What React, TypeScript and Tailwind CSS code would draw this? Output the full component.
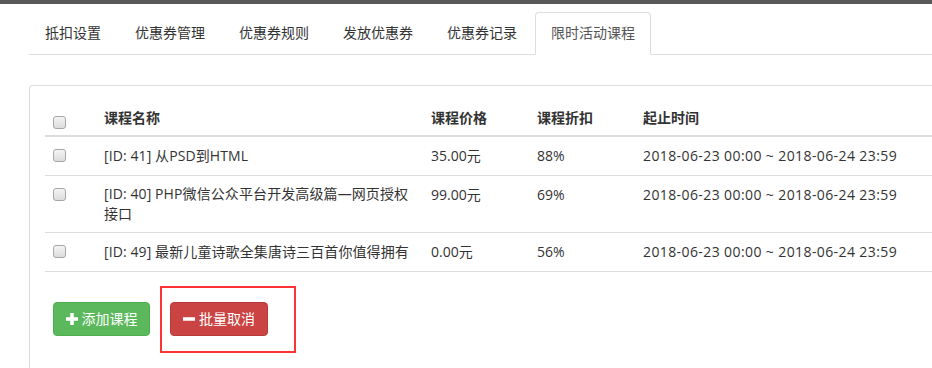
import React from "react";

const font = { fontFamily: '"Open Sans", "Noto Sans CJK SC", sans-serif' };

function Checkbox() {
  return (
    <div className="w-[13px] h-[13px] rounded-[3px] border border-[#a6a6a6] bg-gradient-to-b from-[#f4f4f4] to-[#dcdcdc]" />
  );
}

const tabs = ["抵扣设置", "优惠券管理", "优惠券规则", "发放优惠券", "优惠券记录", "限时活动课程"];

const rows = [
  { name: ["[ID: 41] 从PSD到HTML"], price: "35.00元", disc: "88%" },
  { name: ["[ID: 40] PHP微信公众平台开发高级篇—网页授权", "接口"], price: "99.00元", disc: "69%" },
  { name: ["[ID: 49] 最新儿童诗歌全集唐诗三百首你值得拥有"], price: "0.00元", disc: "56%" },
];

export default function App() {
  return (
    <div className="w-[932px] h-[368px] overflow-hidden bg-white text-[14px] text-[#333]" style={font}>
      <div className="h-[4px] bg-[#595959]" />
      <div className="pl-[29px] mt-[8px]">
        <div className="flex border-b border-[#ddd]">
          {tabs.map((t, i) =>
            i === tabs.length - 1 ? (
              <div
                key={t}
                className="mr-[2px] -mb-px px-[15px] py-[10px] leading-5 border border-[#ddd] border-b-white rounded-t-[4px] bg-white text-[#555]"
              >
                {t}
              </div>
            ) : (
              <div key={t} className="mr-[2px] px-[15px] py-[10px] leading-5 border border-transparent text-[#333]">
                {t}
              </div>
            )
          )}
        </div>
        <div className="mt-[30px] border border-[#ddd] border-r-0 rounded-tl-[4px] pl-[15px] pt-[13px] h-[300px]">
          <div className="w-[903px]">
            <div className="flex h-[38px] border-b-2 border-[#ddd] font-bold">
              <div className="w-[51px] pl-[8px] pt-[17px]"><Checkbox /></div>
              <div className="w-[327px] px-[8px] py-[8px] leading-[22px]">课程名称</div>
              <div className="w-[106px] px-[8px] py-[8px] leading-[22px]">课程价格</div>
              <div className="w-[106px] px-[8px] py-[8px] leading-[22px]">课程折扣</div>
              <div className="flex-1 px-[8px] py-[8px] leading-[22px]">起止时间</div>
            </div>
            {rows.map((r, i) => (
              <div key={i} className={`flex border-b border-[#ddd] ${r.name.length > 1 ? "h-[57px]" : "h-[39px]"}`}>
                <div className="w-[51px] pl-[8px] pt-[12px]"><Checkbox /></div>
                <div className={`w-[327px] px-[8px] py-[8px] ${r.name.length > 1 ? "leading-5" : "leading-[22px]"} whitespace-nowrap tracking-[0.1px]`}>
                  {r.name.map((l, j) => (
                    <div key={j}>{l}</div>
                  ))}
                </div>
                <div className="w-[106px] px-[8px] py-[8px] leading-[22px]">{r.price}</div>
                <div className="w-[106px] px-[8px] py-[8px] leading-[22px]">{r.disc}</div>
                <div className="flex-1 px-[8px] py-[8px] leading-[22px] whitespace-nowrap tracking-[0.4px]">2018-06-23 00:00 ~ 2018-06-24 23:59</div>
              </div>
            ))}
          </div>
          <div className="flex mt-[30px] ml-[8px] gap-[20px]">
            <button className="w-[97px] h-[34px] rounded-[4px] bg-[#5cb85c] border border-[#4cae4c] text-white flex items-center justify-center gap-[4px] leading-5">
              <svg width="12" height="12" viewBox="0 0 12 12"><path d="M4.25 0h3.5v4.25H12v3.5H7.75V12h-3.5V7.75H0v-3.5h4.25z" fill="white" /></svg>
              <span>添加课程</span>
            </button>
            <div className="relative">
              <button className="w-[98px] h-[34px] rounded-[4px] bg-[#c94442] border border-[#b93b39] text-white flex items-center justify-center gap-[4px] leading-5">
                <svg width="12" height="12" viewBox="0 0 12 12"><rect x="0" y="4.25" width="12" height="3.5" fill="white" /></svg>
                <span>批量取消</span>
              </button>
              <div className="absolute left-[-10px] top-[-16px] w-[136px] h-[67px] border-2 border-[#ff3333] pointer-events-none" />
            </div>
          </div>
        </div>
      </div>
    </div>
  );
}
